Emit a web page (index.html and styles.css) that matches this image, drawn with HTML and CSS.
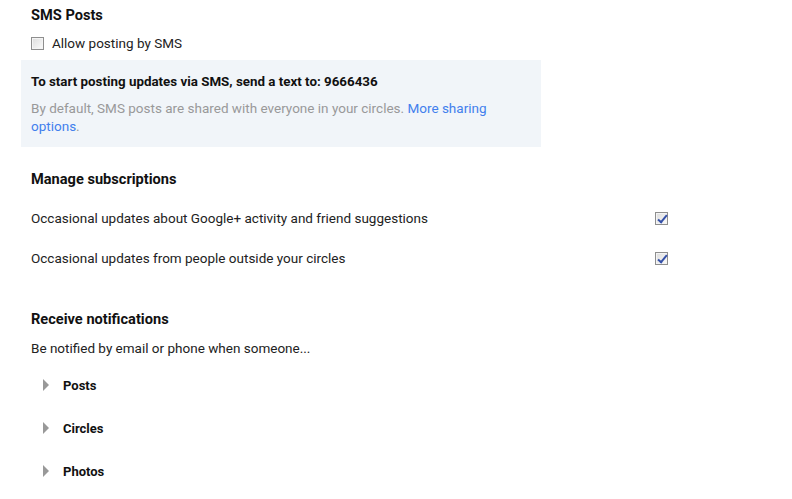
FILE: index.html
```html
<!DOCTYPE html>
<html lang="en">
<head>
    <meta charset="UTF-8">
    <title>Settings</title>
    <link rel="stylesheet" href="styles.css">
</head>
<body>
    <main class="settings">
        <section class="sms">
            <h2>SMS Posts</h2>
            <label class="check-row">
                <span class="box"></span>
                Allow posting by SMS
            </label>
            <div class="info">
                <p class="info-title">To start posting updates via SMS, send a text to: 9666436</p>
                <p class="info-text">By default, SMS posts are shared with everyone in your circles. <a href="#">More sharing options</a>.</p>
            </div>
        </section>

        <section class="subs">
            <h2>Manage subscriptions</h2>
            <div class="sub-row">
                <span>Occasional updates about Google+ activity and friend suggestions</span>
                <span class="box checked"></span>
            </div>
            <div class="sub-row">
                <span>Occasional updates from people outside your circles</span>
                <span class="box checked"></span>
            </div>
        </section>

        <section class="notify">
            <h2>Receive notifications</h2>
            <p class="lead">Be notified by email or phone when someone...</p>
            <ul class="groups">
                <li><span class="arrow"></span>Posts</li>
                <li><span class="arrow"></span>Circles</li>
                <li><span class="arrow"></span>Photos</li>
            </ul>
        </section>
    </main>
</body>
</html>
```

FILE: styles.css
```css
body {
    font-family: Roboto, Arial, sans-serif;
    font-size: 13.5px;
    line-height: 20px;
    color: #222;
    margin: 0;
    background: #fff;
}

.settings {
    padding-left: 31px;
    width: 637px;
}

h2 {
    font-size: 14.6px;
    font-weight: bold;
    line-height: 20px;
    color: #111;
    margin: 0;
}

p {
    margin: 0;
}

.sms h2 {
    margin-top: 5px;
}

.check-row {
    display: flex;
    align-items: center;
    gap: 8px;
    margin-top: 8px;
}

.box {
    display: inline-block;
    width: 11px;
    height: 11px;
    border: 1px solid #8e8e8e;
    background: linear-gradient(135deg, #dcdcdc, #fbfbfb);
    box-shadow: inset 0 0 0 1px #f4f4f4;
    flex-shrink: 0;
    position: relative;
}

.box.checked::after {
    content: "";
    position: absolute;
    left: 4px;
    top: 0;
    width: 3px;
    height: 8px;
    border: solid #3450a8;
    border-width: 0 2px 2px 0;
    transform: rotate(40deg);
}

.info {
    margin: 7px 0 0 -10px;
    width: 500px;
    padding: 12px 10px;
    background: #f1f5f9;
}

.info-title {
    font-size: 13.35px;
    font-weight: bold;
    color: #111;
}

.info-text {
    margin-top: 7px;
    line-height: 18px;
    color: #999;
}

.info-text a {
    color: #427fed;
    text-decoration: none;
}

.subs h2 {
    margin-top: 22px;
}

.sub-row {
    display: flex;
    justify-content: space-between;
    align-items: center;
    margin-top: 19px;
}

.sub-row + .sub-row {
    margin-top: 20px;
}

.notify h2 {
    margin-top: 41px;
}

.lead {
    margin-top: 9px;
}

.groups {
    list-style: none;
    margin: 18px 0 0;
    padding: 0 0 0 12px;
}

.groups li {
    display: flex;
    align-items: center;
    font-weight: bold;
    font-size: 13px;
    color: #111;
    margin-bottom: 23px;
}

.arrow {
    width: 0;
    height: 0;
    border-top: 6px solid transparent;
    border-bottom: 6px solid transparent;
    border-left: 6px solid #999;
    margin-right: 14px;
    margin-top: -2px;
}
```
